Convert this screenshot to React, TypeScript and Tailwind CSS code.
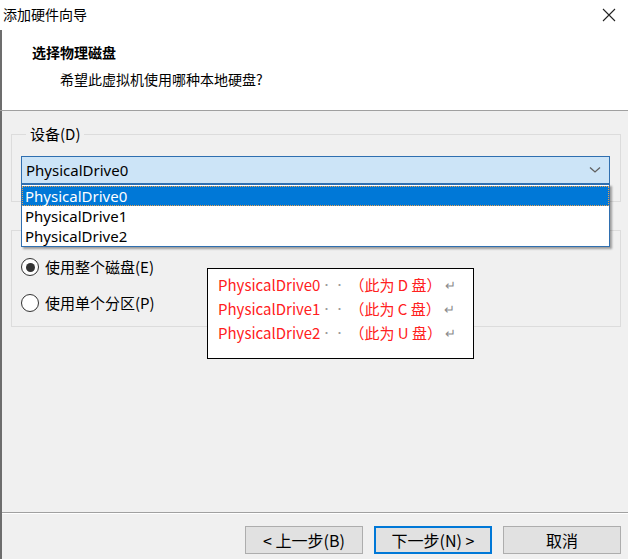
import React from "react";

const ui = { fontFamily: '"Noto Sans", "Noto Sans CJK SC", sans-serif' };
const cjk = { fontFamily: '"Noto Sans CJK SC", "Noto Sans", sans-serif' };

function Radio({ checked, label }: { checked?: boolean; label: string }) {
  return (
    <div className="flex items-center h-[20px]">
      <div className="w-[18px] h-[18px] rounded-full border border-[#333333] bg-white flex items-center justify-center">
        {checked && <div className="w-[9px] h-[9px] rounded-full bg-[#333333]" />}
      </div>
      <span className="ml-[6px] text-[15px] text-black leading-[20px]" style={cjk}>{label}</span>
    </div>
  );
}

function NoteLine({ n, d }: { n: string; d: string }) {
  return (
    <div className="flex items-center h-[24px] text-[15px] leading-[24px]">
      <span className="text-[#ff2020]">PhysicalDrive{n}</span>
      <span className="text-[#9a9a9a] text-[10px] tracking-[3px] ml-[1px]">··</span>
      <span className="text-[#ff2020] ml-[2px]">（此为 {d} 盘）</span>
      <span className="text-[#8a8a8a] text-[13px] ml-[3px]">↵</span>
    </div>
  );
}

function Btn({ children, primary }: { children: React.ReactNode; primary?: boolean }) {
  return (
    <div
      className={
        "w-[118px] h-[28px] flex items-center justify-center bg-[#e1e1e1] text-[16px] text-black " +
        (primary ? "border-2 border-[#0078d7]" : "border border-[#adadad]")
      }
      style={cjk}
    >
      {children}
    </div>
  );
}

export default function App() {
  return (
    <div className="w-[628px] h-[559px] bg-[#f0f0f0] flex flex-col relative overflow-hidden" style={ui}>
      {/* header */}
      <div className="h-[111px] bg-white border-b border-[#a0a0a0] flex flex-col">
        <div className="h-[30px] flex items-center justify-between pl-[3px] pr-[12px]">
          <span className="text-[14px] text-black leading-[20px] -mt-[2px]" style={cjk}>添加硬件向导</span>
          <svg width="14" height="14" viewBox="0 0 14 14">
            <path d="M1 1 L13 13 M13 1 L1 13" stroke="#222" strokeWidth="1.1" fill="none" />
          </svg>
        </div>
        <div className="flex-1 border-l-2 border-l-[#6d6d6d] flex flex-col" style={cjk}>
          <div className="pl-[30px] mt-[10px] text-[14px] font-bold text-black leading-[24px]">选择物理磁盘</div>
          <div className="pl-[58px] mt-[3px] text-[14px] text-black leading-[24px]">希望此虚拟机使用哪种本地硬盘?</div>
        </div>
      </div>

      {/* body */}
      <div className="flex-1 border-l-2 border-l-[#6d6d6d] flex flex-col">
        <div className="ml-[9px] w-[610px] mt-[13px]">
          <fieldset className="border border-[#dcdcdc] pl-[9px] pr-[10px] pb-[17px]">
            <legend className="ml-[5px] px-[4px] text-[15px] leading-[20px] text-black" style={cjk}>设备(D)</legend>
            <div className="relative mt-[12px]">
              <div className="h-[28px] bg-[#cce4f7] border border-[#2f6fb0] flex items-center justify-between pl-[4px] pr-[8px]">
                <span className="text-[15px] text-black">PhysicalDrive0</span>
                <svg width="12" height="8" viewBox="0 0 12 8">
                  <path d="M1 1.5 L6 6 L11 1.5" stroke="#606060" strokeWidth="1.3" fill="none" />
                </svg>
              </div>
              <div className="absolute left-0 right-0 top-full z-10 bg-white border border-[#2f6fb0] shadow-[2px_2px_2px_rgba(0,0,0,0.35)] pt-[1px]">
                <div className="h-[20px] bg-[#0078d7] border border-dotted border-[#e8a050] flex items-center pl-[2px] text-[15px] text-white">
                  PhysicalDrive0
                </div>
                <div className="h-[20px] flex items-center pl-[3px] text-[15px] text-black">PhysicalDrive1</div>
                <div className="h-[20px] flex items-center pl-[3px] text-[15px] text-black">PhysicalDrive2</div>
              </div>
            </div>
          </fieldset>

          <div className="mt-[28px] h-[97px] border border-[#dcdcdc] flex flex-col pl-[9px] pt-[26px] gap-[16px]">
            <Radio checked label="使用整个磁盘(E)" />
            <Radio label="使用单个分区(P)" />
          </div>
        </div>

        <div className="flex-1" />

        {/* footer */}
        <div className="h-[47px] border-t border-[#a0a0a0] flex flex-col">
          <div className="h-px bg-white" />
          <div className="flex justify-end gap-[11px] pr-[7px] mt-[12px]">
            <Btn>&lt; 上一步(B)</Btn>
            <Btn primary>下一步(N) &gt;</Btn>
            <Btn>取消</Btn>
          </div>
        </div>
      </div>

      {/* pasted annotation */}
      <div className="absolute left-[207px] top-[268px] w-[267px] h-[91px] bg-white border border-black pl-[10px] pt-[4px] flex flex-col" style={cjk}>
        <NoteLine n="0" d="D" />
        <NoteLine n="1" d="C" />
        <NoteLine n="2" d="U" />
      </div>
    </div>
  );
}
